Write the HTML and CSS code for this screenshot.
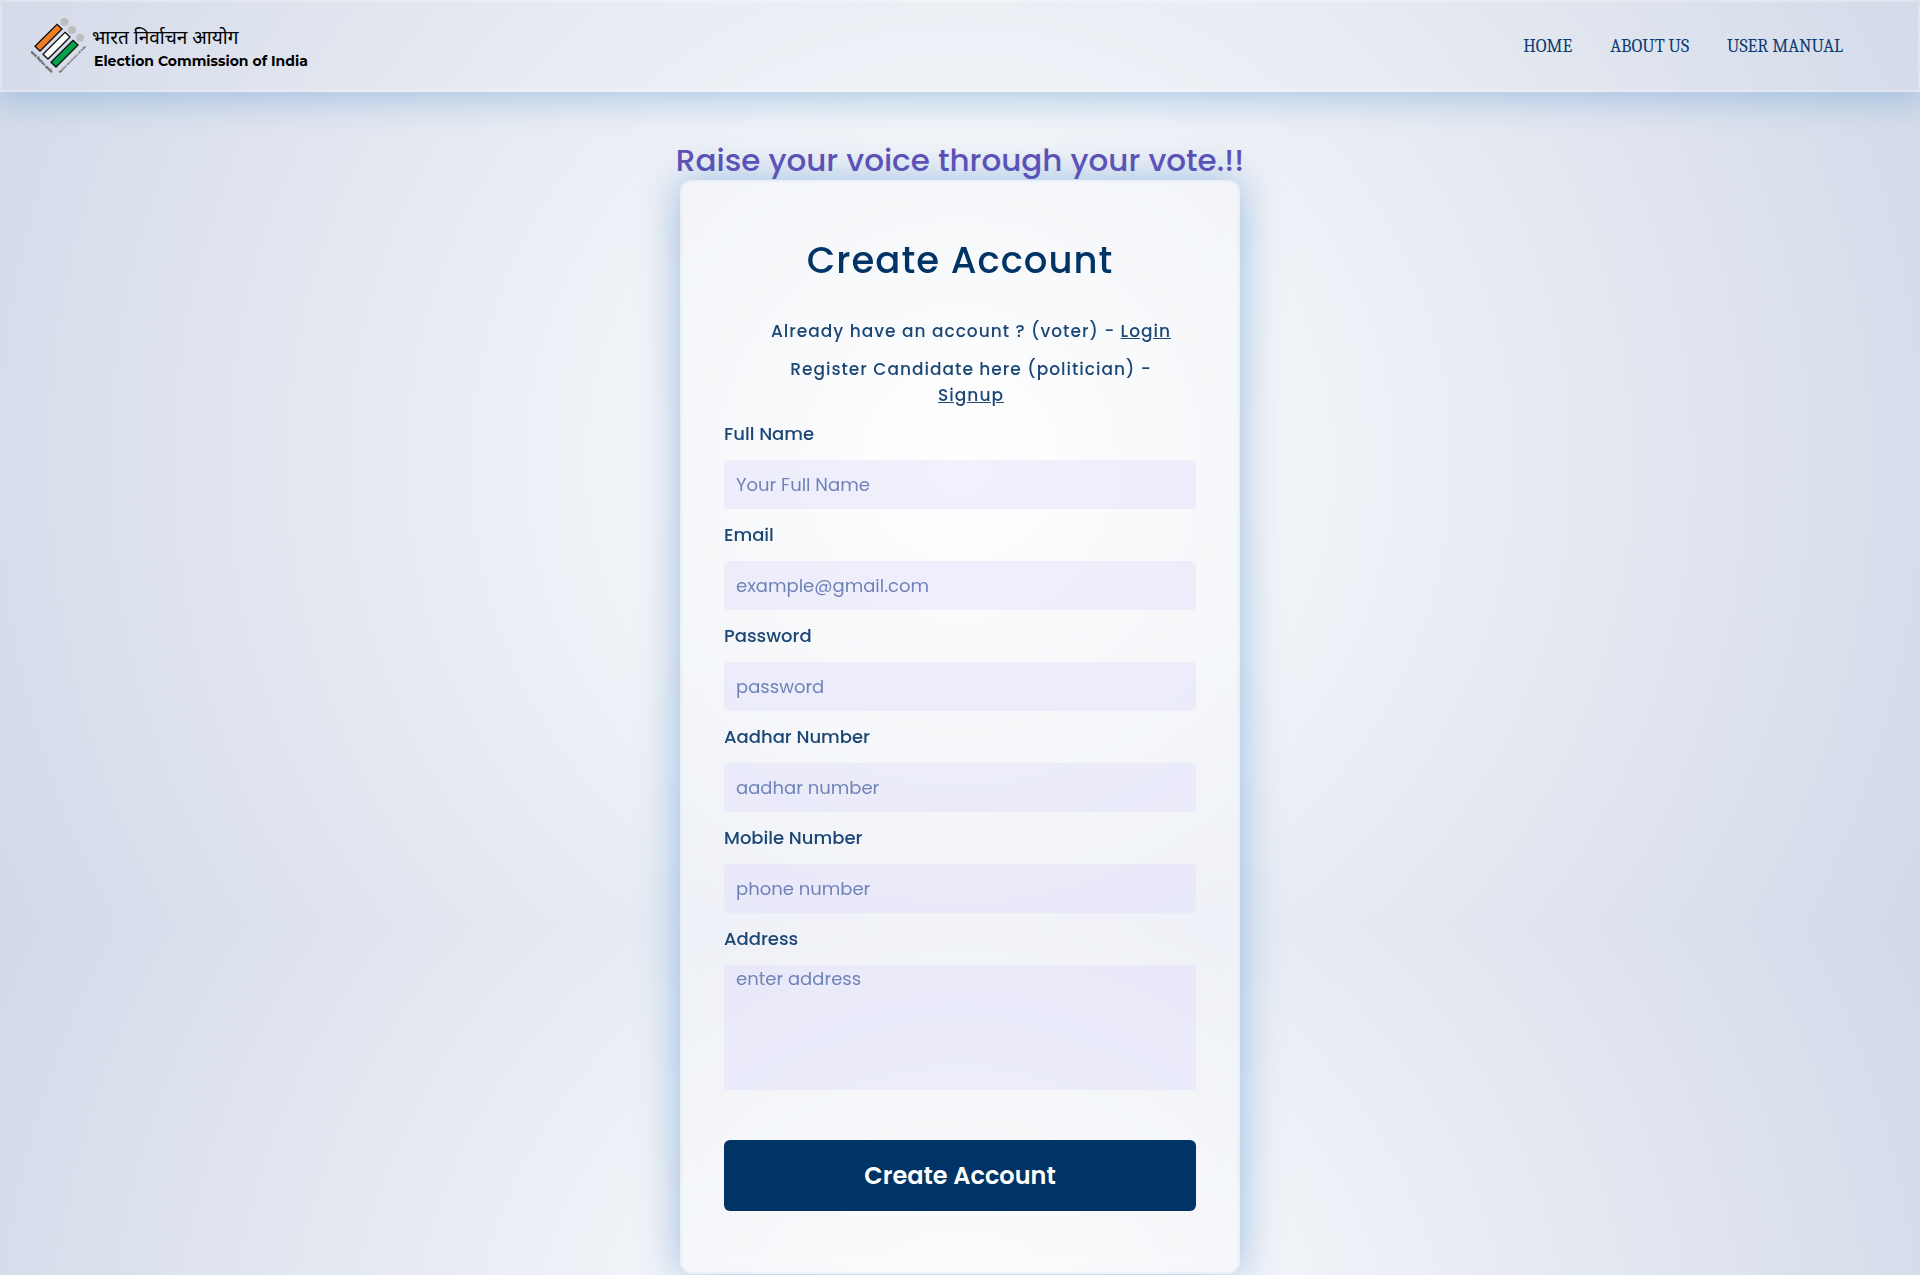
FILE: index.html
```html
<!DOCTYPE html>
<html lang="en">
<head>
<meta charset="utf-8">
<title>Election Commission of India - Create Account</title>
<meta name="viewport" content="width=device-width, initial-scale=1">
<link rel="stylesheet" href="styles.css">
</head>
<body>
<header class="site-header">
  <a class="brand" href="#">
    <svg class="brand-mark" viewBox="84 48 180 180" aria-hidden="true">
      <g fill="#bdbdbd">
        <circle cx="193" cy="66" r="12"/>
        <circle cx="216" cy="90" r="12"/>
        <circle cx="240" cy="113" r="12"/>
      </g>
      <g stroke="#111" stroke-width="4">
        <path fill="#ee7d23" d="M171 73l15 14-66 66-15-14z"/>
        <path fill="#fff" d="M195 97l15 14-66 66-15-14z"/>
        <path fill="#04a24b" d="M219 121l15 14-66 66-15-14z"/>
      </g>
      <text class="mark-text" font-size="11" transform="translate(90 157) rotate(45)">भारत निर्वाचन आयोग</text>
      <text class="mark-text" font-size="8" transform="translate(179 220) rotate(-45)">Election Commission of India</text>
    </svg>
    <span class="brand-name">
      <span class="brand-hindi" lang="hi">भारत निर्वाचन आयोग</span>
      <span class="brand-english">Election Commission of India</span>
    </span>
  </a>
  <nav class="site-nav">
    <a href="#">HOME</a>
    <a href="#">ABOUT US</a>
    <a href="#">USER MANUAL</a>
  </nav>
</header>
<main class="page">
  <h1 class="slogan">Raise your voice through your vote.!!</h1>
  <form class="card">
    <h2 class="card-title">Create Account</h2>
    <div class="card-links">
      <p>Already have an account ? (voter) - <a href="#">Login</a></p>
      <p>Register Candidate here (politician) - <a href="#">Signup</a></p>
    </div>
    <div class="field">
      <label for="name">Full Name</label>
      <input id="name" type="text" placeholder="Your Full Name">
    </div>
    <div class="field">
      <label for="email">Email</label>
      <input id="email" type="email" placeholder="example@gmail.com">
    </div>
    <div class="field">
      <label for="password">Password</label>
      <input id="password" type="password" placeholder="password">
    </div>
    <div class="field">
      <label for="aadhar">Aadhar Number</label>
      <input id="aadhar" type="text" placeholder="aadhar number">
    </div>
    <div class="field">
      <label for="mobile">Mobile Number</label>
      <input id="mobile" type="tel" placeholder="phone number">
    </div>
    <div class="field">
      <label for="address">Address</label>
      <textarea id="address" placeholder="enter address"></textarea>
    </div>
    <button class="submit" type="submit">Create Account</button>
  </form>
</main>
</body>
</html>
```
FILE: styles.css
```css
* {
  box-sizing: border-box;
}

html {
  background: radial-gradient(circle, #fff, #d2d9e8) 0 0 / 100% 926px repeat-y;
}

body {
  margin: 0;
  color: #003366;
  font-family: Poppins, Inter, sans-serif;
}

a {
  color: inherit;
}

.site-header {
  display: flex;
  align-items: center;
  justify-content: space-between;
  height: 92px;
  padding: 0 75px 0 26px;
  border: 2px solid rgba(255, 255, 255, 0.25);
  background: rgba(255, 255, 255, 0.05);
  box-shadow: 0 8px 32px rgba(40, 118, 195, 0.3);
}

.brand {
  display: flex;
  align-items: center;
  gap: 4px;
  color: #000;
  text-decoration: none;
}

.brand-mark {
  width: 60px;
  height: 60px;
  overflow: visible;
}

.mark-text {
  fill: #111;
  font-family: "Noto Sans Devanagari", "Noto Sans", sans-serif;
  font-weight: 600;
}

.brand-name {
  display: flex;
  flex-direction: column;
  padding-top: 5px;
}

.brand-hindi {
  font-family: "Noto Sans Devanagari", "Noto Sans", sans-serif;
  font-size: 19px;
  line-height: 24px;
}

.brand-english {
  padding-left: 2px;
  font-family: Montserrat, Inter, sans-serif;
  font-size: 14px;
  font-weight: 700;
  line-height: 18px;
}

.site-nav {
  display: flex;
  gap: 38px;
  color: #0d3d72;
  font-family: Cambria, Caladea, "Noto Serif", serif;
  font-size: 18px;
}

.site-nav a {
  text-decoration: none;
}

.page {
  display: flex;
  flex-direction: column;
  align-items: center;
  padding-top: 48px;
}

.slogan {
  margin: 0;
  color: #6150b6;
  font-size: 31px;
  font-weight: 500;
  line-height: 40px;
}

.card {
  width: 560px;
  max-width: 100%;
  margin-bottom: 2px;
  padding: 48px 42px 61px;
  border: 2px solid rgba(225, 235, 250, 0.6);
  border-radius: 12px;
  background: rgba(255, 255, 255, 0.25);
  box-shadow: 0 0 40px rgba(40, 118, 195, 0.44);
  backdrop-filter: blur(8px);
}

.card-title {
  margin: 0 0 28px;
  font-size: 37px;
  font-weight: 500;
  letter-spacing: 1px;
  line-height: 60px;
  text-align: center;
}

.card-links {
  padding: 0 24px 0 46px;
  color: #1b4775;
  font-size: 17px;
  font-weight: 500;
  letter-spacing: 1px;
  line-height: 26px;
  text-align: center;
}

.card-links p {
  margin: 0 0 12px;
}

.field {
  display: flex;
  flex-direction: column;
  gap: 13px;
  margin-bottom: 12px;
}

label {
  color: #1b4775;
  font-size: 18px;
  font-weight: 500;
  line-height: 27px;
}

input,
textarea {
  width: 100%;
  height: 49px;
  padding: 0 12px;
  border: 0;
  border-radius: 4px;
  background: rgba(225, 222, 250, 0.45);
  color: #003366;
  font-family: inherit;
  font-size: 18px;
  resize: none;
}

textarea {
  height: 125px;
}

::placeholder {
  color: #6f83b8;
}

.submit {
  width: 100%;
  height: 71px;
  margin-top: 38px;
  border: 0;
  border-radius: 6px;
  background: #003366;
  color: #fff;
  font-family: inherit;
  font-size: 24px;
  font-weight: 600;
}
```
